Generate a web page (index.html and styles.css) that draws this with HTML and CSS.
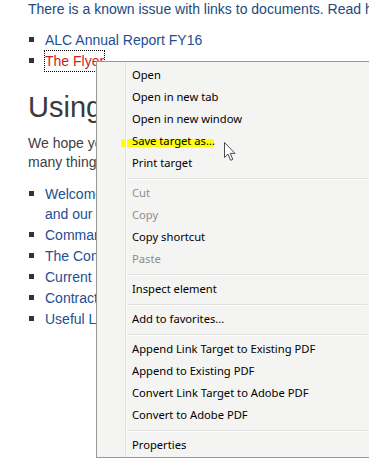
FILE: index.html
```html
<!DOCTYPE html>
<html>
<head>
<meta charset="utf-8">
<link rel="stylesheet" href="styles.css">
</head>
<body>
<div class="page">
  <p class="notice">There is a known issue with links to documents. Read how to fix it here.</p>
  <ul class="list list-top">
    <li><a href="#" class="link">ALC Annual Report FY16</a></li>
    <li><a href="#" class="link link-focus">The Flyer</a></li>
  </ul>
  <h1 class="heading">Using this site</h1>
  <p class="intro">We hope you find this site useful. There are<br>many things you can do here, including:</p>
  <ul class="list list-main">
    <li><a href="#" class="link">Welcome to the new intranet site<br>and our latest news</a></li>
    <li><a href="#" class="link">Commands and procedures</a></li>
    <li><a href="#" class="link">The Company directory</a></li>
    <li><a href="#" class="link">Current projects</a></li>
    <li><a href="#" class="link">Contracts and forms</a></li>
    <li><a href="#" class="link">Useful Links</a></li>
  </ul>
</div>

<div class="menu">
  <div class="gutter"></div>
  <div class="items">
    <div class="item">Open</div>
    <div class="item">Open in new tab</div>
    <div class="item">Open in new window</div>
    <div class="item item-marked">Save target as...</div>
    <div class="item">Print target</div>
    <div class="sep"></div>
    <div class="item disabled">Cut</div>
    <div class="item disabled">Copy</div>
    <div class="item">Copy shortcut</div>
    <div class="item disabled">Paste</div>
    <div class="sep"></div>
    <div class="item">Inspect element</div>
    <div class="sep"></div>
    <div class="item">Add to favorites...</div>
    <div class="sep"></div>
    <div class="item">Append Link Target to Existing PDF</div>
    <div class="item">Append to Existing PDF</div>
    <div class="item">Convert Link Target to Adobe PDF</div>
    <div class="item">Convert to Adobe PDF</div>
    <div class="sep"></div>
    <div class="item">Properties</div>
  </div>
</div>

<svg class="cursor" width="13" height="20" viewBox="0 0 13 20">
  <path d="M0.5 0.5 L0.5 15.5 L4 12.2 L6.5 18.3 L8.8 17.4 L6.3 11.4 L11 11.4 Z" fill="#fff" stroke="#4a4a4a" stroke-width="1" stroke-linejoin="miter"/>
</svg>
</body>
</html>
```

FILE: styles.css
```css
html, body {
  margin: 0;
  padding: 0;
}
body {
  position: relative;
  width: 369px;
  height: 466px;
  overflow: hidden;
  background: #fff;
  font-family: "Liberation Sans", Arial, sans-serif;
  font-size: 14px;
}
.page {
  width: 700px;
  padding-left: 28px;
}
.notice {
  margin: 0;
  line-height: 18px;
  color: #21497d;
  white-space: nowrap;
}
.list {
  list-style: none;
  margin: 0;
  padding: 0 0 0 1px;
}
.list li {
  display: flex;
  align-items: flex-start;
  line-height: 20px;
  margin-bottom: 1px;
}
.list li::before {
  content: "";
  flex: 0 0 5px;
  height: 5px;
  margin-top: 7px;
  margin-right: 11px;
  background: #333;
}
.list-top {
  margin-top: 12px;
}
.link {
  color: #1c4f93;
  text-decoration: none;
}
.link-focus {
  color: #cc2222;
  outline: 1px dotted #000;
}
.heading {
  margin: 19px 0 0;
  font-size: 29px;
  line-height: 34px;
  font-weight: normal;
  color: #3a3a3a;
}
.intro {
  margin: 10px 0 0;
  line-height: 19px;
  color: #404040;
}
.list-main {
  margin-top: 12px;
}

/* context menu */
.menu {
  position: absolute;
  left: 96px;
  top: 61px;
  z-index: 10;
  width: 275px;
  box-sizing: border-box;
  display: flex;
  border: 1px solid #979797;
  background: #f4f4f2;
  font-family: "Noto Sans", "DejaVu Sans", sans-serif;
  font-size: 11.2px;
  color: #000;
}
.gutter {
  flex: 0 0 28px;
  border-right: 1px solid #e2e3e1;
  box-shadow: 1px 0 0 #fbfbfb;
}
.items {
  flex: 1;
  padding: 2px 0 1px;
}
.item {
  position: relative;
  height: 22px;
  line-height: 22px;
  padding-left: 6px;
  white-space: nowrap;
}
.item.disabled {
  color: #8d8d8d;
}
.item-marked::before {
  content: "";
  position: absolute;
  left: -5px;
  top: 9px;
  width: 93px;
  height: 8px;
  background: #ffff00;
  z-index: -1;
}
.sep {
  height: 1px;
  margin: 4px 3px 3px 1px;
  background: #e0e0de;
  box-shadow: 0 1px 0 #fdfdfd;
}
.cursor {
  position: absolute;
  left: 224px;
  top: 142px;
  z-index: 20;
}
```
